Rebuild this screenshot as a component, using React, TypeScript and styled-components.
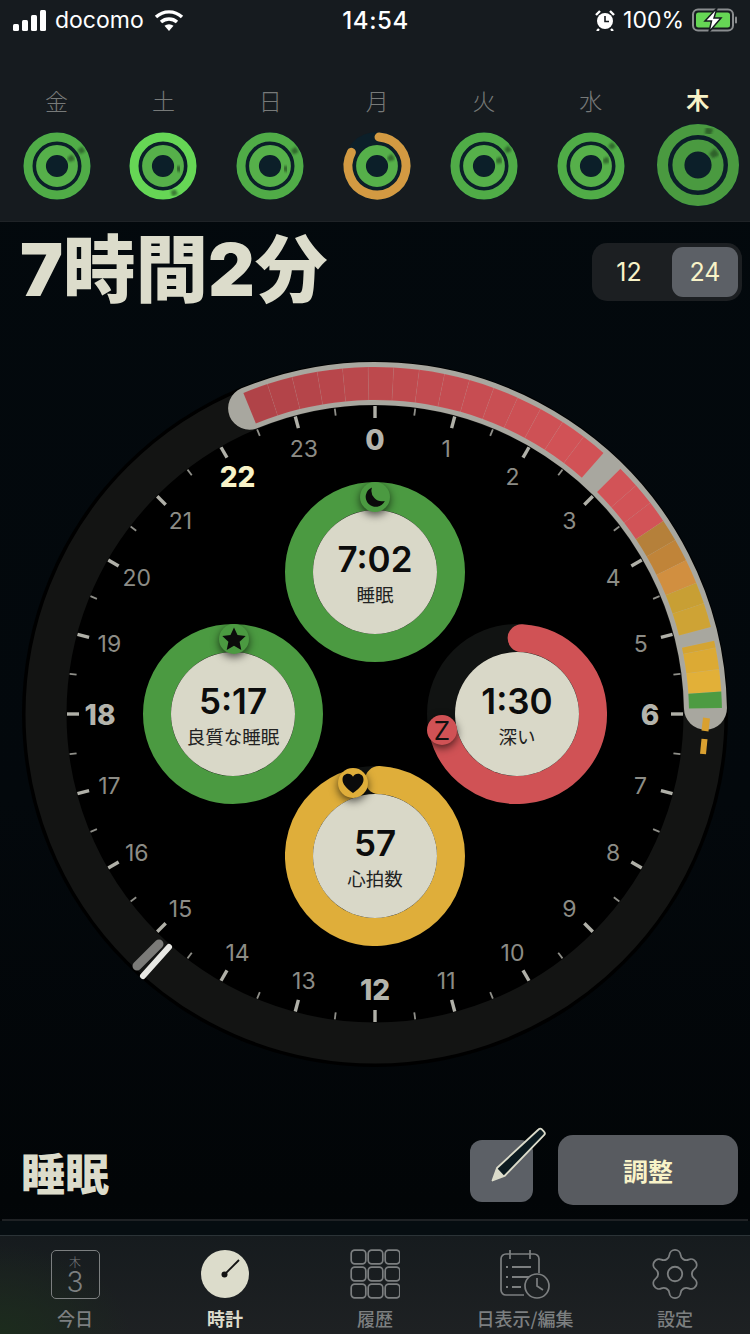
import React from "react";
import styled, { createGlobalStyle } from "styled-components";
import { Settings } from "lucide-react";

const FONT = `Inter, "Noto Sans CJK JP", "Noto Sans", sans-serif`;
const CJK = `"Noto Sans CJK JP", Inter, sans-serif`;
const CREAM = "#dcdccb";
const PALE = "#f8f3c8";
const GREY = "#7c7f80";

const Global = createGlobalStyle`
  html, body { margin: 0; padding: 0; background: #03080c; }
  #root { width: 750px; height: 1334px; overflow: hidden; }
  * { box-sizing: border-box; }
`;

const Page = styled.div`
  width: 750px;
  height: 1334px;
  display: flex;
  flex-direction: column;
  font-family: ${FONT};
  background: linear-gradient(180deg, #03090d 0%, #03080c 60%, #020507 90%, #03090c 100%);
  color: ${CREAM};
`;

const Head = styled.header`
  height: 222px;
  flex: none;
  background: #161b1f;
  border-bottom: 1px solid #1f2327;
  display: flex;
  flex-direction: column;
`;

const StatusBar = styled.div`
  height: 40px;
  padding: 0 12px 0 13px;
  display: flex;
  align-items: center;
  color: #fff;
  font-size: 23px;
`;
const StatusLeft = styled.div`
  flex: 1;
  display: flex;
  align-items: center;
  gap: 9px;
`;
const StatusRight = styled.div`
  flex: 1;
  display: flex;
  align-items: center;
  justify-content: flex-end;
  gap: 8px;
`;
const Clock = styled.div`
  font-weight: 500;
  font-size: 24px;
  letter-spacing: 0.6px;
`;
const StatusText = styled.span`
  letter-spacing: 0;
`;

const Week = styled.div`
  padding: 42px 3px 0 3.2px;
  display: flex;
`;
const Day = styled.div`
  width: 106.85px;
  flex: none;
  height: 127px;
  display: flex;
  flex-direction: column;
  align-items: center;
`;
const DayName = styled.div<{ $now?: boolean }>`
  height: 39px;
  font-family: ${CJK};
  font-size: 23px;
  line-height: 36px;
  font-weight: ${(p) => (p.$now ? 700 : 300)};
  color: ${(p) => (p.$now ? PALE : "#777a79")};
  margin-top: ${(p) => (p.$now ? "-1px" : "0")};
  padding-bottom: ${(p) => (p.$now ? "0" : "3px")};
`;
const RingBox = styled.svg<{ $now?: boolean }>`
  width: 90px;
  height: 90px;
  flex: none;
  margin-top: ${(p) => (p.$now ? "3px" : "0")};
`;

const TitleRow = styled.div`
  height: 132px;
  flex: none;
  padding: 21px 8px 0 20px;
  display: flex;
  justify-content: space-between;
  align-items: flex-start;
`;
const BigTitle = styled.h1`
  margin: 0;
  font-family: ${FONT};
  font-size: 72.5px;
  line-height: 54px;
  height: 54px;
  font-weight: 900;
  letter-spacing: 0;
  color: ${CREAM};
  display: flex;
  align-items: center;
`;
const Toggle = styled.div`
  width: 150px;
  height: 58px;
  border-radius: 15px;
  background: #1c1f22;
  padding: 4px;
  display: flex;
  justify-content: space-between;
`;
const ToggleItem = styled.div<{ $on?: boolean }>`
  width: 66px;
  height: 50px;
  border-radius: 11px;
  background: ${(p) => (p.$on ? "#5c6066" : "transparent")};
  color: ${PALE};
  font-size: 25px;
  display: flex;
  align-items: center;
  justify-content: center;
`;

const Dial = styled.div`
  position: relative;
  height: 720px;
  flex: none;
`;
const DialArt = styled.svg`
  display: block;
  width: 750px;
  height: 720px;
`;
const HourText = styled.text<{ $kind: "minor" | "major" | "now" }>`
  font-family: ${FONT};
  text-anchor: middle;
  dominant-baseline: central;
  font-size: ${(p) => (p.$kind === "minor" ? 23 : 28)}px;
  font-weight: ${(p) => (p.$kind === "minor" ? 400 : 800)};
  fill: ${(p) => (p.$kind === "minor" ? "#8c8c86" : p.$kind === "now" ? PALE : "#b4b4ac")};
`;

const Gauge = styled.div<{ $x: number; $y: number }>`
  position: absolute;
  left: ${(p) => p.$x - 90}px;
  top: ${(p) => p.$y - 354 - 90}px;
  width: 180px;
  height: 180px;
`;
const GaugeArt = styled.svg`
  position: absolute;
  inset: 0;
  width: 180px;
  height: 180px;
`;
const GaugeFace = styled.div`
  position: absolute;
  left: 28px;
  top: 28px;
  width: 124px;
  height: 124px;
  border-radius: 50%;
  padding-top: 3px;
  background: #d9d8c8;
  color: #0c0c0c;
  display: flex;
  flex-direction: column;
  align-items: center;
  justify-content: center;
`;
const GaugeValue = styled.div`
  font-size: 35px;
  line-height: 38px;
  font-weight: 600;
`;
const GaugeLabel = styled.div`
  font-family: ${CJK};
  font-size: 18.5px;
  line-height: 26px;
  margin-top: 3px;
  font-weight: 400;
  color: #222;
  white-space: nowrap;
`;
const Badge = styled.div<{ $dx: number; $dy: number; $color: string }>`
  position: absolute;
  left: ${(p) => p.$dx + 90 - 15}px;
  top: ${(p) => p.$dy + 90 - 15}px;
  width: 30px;
  height: 30px;
  border-radius: 50%;
  background: ${(p) => p.$color};
  box-shadow: 0 3px 8px rgba(0, 0, 0, 0.65);
  display: flex;
  align-items: center;
  justify-content: center;
  color: #111;
  font-size: 26px;
  font-weight: 400;
`;
const BadgeIcon = styled.svg`
  width: 26px;
  height: 26px;
`;

const Actions = styled.div`
  height: 145px;
  flex: none;
  padding: 61px 12px 0 21px;
  display: flex;
  align-items: flex-start;
`;
const Subject = styled.div`
  flex: 1;
  font-family: ${CJK};
  font-size: 44px;
  font-weight: 900;
  line-height: 64px;
  margin-top: 5px;
  color: ${CREAM};
`;
const PenButton = styled.div`
  position: relative;
  width: 63px;
  height: 62px;
  margin-top: 5px;
  margin-right: 25px;
  border-radius: 12px;
  background: #5c6066;
`;
const PenArt = styled.svg`
  position: absolute;
  left: 19px;
  top: -14px;
  width: 60px;
  height: 60px;
`;
const AdjustButton = styled.div`
  width: 180px;
  height: 70px;
  border-radius: 15px;
  background: #585b60;
  color: ${PALE};
  font-family: ${CJK};
  font-size: 25px;
  font-weight: 700;
  display: flex;
  align-items: center;
  justify-content: center;
`;

const Divider = styled.div`
  height: 2px;
  flex: none;
  margin: 0 2px;
  background: #1f2225;
`;
const Spacer = styled.div`
  height: 14px;
  flex: none;
  background: #060d11;
`;
const TabBar = styled.nav`
  flex: 1;
  border-top: 1px solid #2b3337;
  display: flex;
  background: radial-gradient(ellipse 130px 90px at 0 100%, #1c2c1d 0%, transparent 100%),
    linear-gradient(180deg, #161b1e 0%, #1e2123 100%);
`;
const Tab = styled.div<{ $on?: boolean }>`
  width: 150px;
  padding-top: 13px;
  display: flex;
  flex-direction: column;
  align-items: center;
  color: ${(p) => (p.$on ? CREAM : GREY)};
`;
const TabIconBox = styled.div`
  width: 50px;
  height: 50px;
  display: flex;
  align-items: center;
  justify-content: center;
`;
const TabLabel = styled.div<{ $on?: boolean }>`
  margin-top: 6px;
  font-family: ${CJK};
  font-size: 18px;
  line-height: 26px;
  font-weight: ${(p) => (p.$on ? 700 : 500)};
  white-space: nowrap;
`;
const TodayIcon = styled.div`
  width: 49px;
  height: 49px;
  border: 1.5px solid ${GREY};
  border-radius: 5px;
  display: flex;
  flex-direction: column;
  align-items: center;
  font-weight: 300;
`;
const TodayDow = styled.div`
  font-family: ${CJK};
  font-size: 12px;
  line-height: 13px;
  margin-top: 4px;
  font-weight: 300;
`;
const TodayNum = styled.div`
  font-size: 28px;
  line-height: 28px;
  font-weight: 300;
`;
const TabSvg = styled.svg`
  width: 50px;
  height: 50px;
`;
const Gear = styled(Settings)`
  width: 58px;
  height: 58px;
  flex: none;
`;

/* ---------- geometry helpers ---------- */
const CX = 375;
const CY = 714;
const pol = (a: number, r: number, cx = CX, cy = CY): [number, number] => {
  const t = (a * Math.PI) / 180;
  return [cx + r * Math.sin(t), cy - r * Math.cos(t)];
};
const arc = (a0: number, a1: number, r: number, cx = CX, cy = CY) => {
  const [x0, y0] = pol(a0, r, cx, cy);
  const [x1, y1] = pol(a1, r, cx, cy);
  return `M${x0} ${y0}A${r} ${r} 0 ${a1 - a0 > 180 ? 1 : 0} 1 ${x1} ${y1}`;
};
const band = (a0: number, a1: number, r0: number, r1: number) => {
  const [a, b] = pol(a0, r1);
  const [c, d] = pol(a1, r1);
  const [e, f] = pol(a1, r0);
  const [g, h] = pol(a0, r0);
  return `M${a} ${b}A${r1} ${r1} 0 0 1 ${c} ${d}L${e} ${f}A${r0} ${r0} 0 0 0 ${g} ${h}Z`;
};
const mix = (t: number) => {
  const A = [176, 67, 72];
  const B = [209, 82, 86];
  const k = Math.min(1, Math.max(0, t));
  return `rgb(${A.map((v, i) => Math.round(v + (B[i] - v) * k)).join(",")})`;
};

const redSegs = Array.from({ length: 15 }, (_, i) => {
  const s = (41.2 + 22.3) / 15;
  return { a0: -22.3 + i * s, a1: -22.3 + (i + 1) * s, c: mix(i / 13) };
});
const sleepSegs = [
  { a0: 45, a1: 48.8, c: "#d25357" },
  { a0: 48.8, a1: 52.5, c: "#d25357" },
  { a0: 52.5, a1: 56.2, c: "#d25357" },
  { a0: 56.2, a1: 59.9, c: "#b5803a" },
  { a0: 59.9, a1: 63.7, c: "#c08439" },
  { a0: 63.7, a1: 67.8, c: "#d18f40" },
  { a0: 67.8, a1: 71.4, c: "#c89f34" },
  { a0: 71.4, a1: 75.5, c: "#cea335" },
  { a0: 77.8, a1: 79, c: "#d4a433" },
  { a0: 79, a1: 82.6, c: "#dcaa34" },
  { a0: 82.6, a1: 86.3, c: "#e2b038" },
  { a0: 86.3, a1: 89, c: "#4d9b42" },
];

const hours = Array.from({ length: 24 }, (_, h) => h);

function DialDrawing() {
  return (
    <DialArt viewBox="0 354 750 720">
      <circle cx={CX} cy={CY} r={353} fill="#000" />
      <circle cx={CX} cy={CY} r={329} fill="none" stroke="#131413" strokeWidth={41} />
      <path d={arc(-22.3, 89, 330.5)} fill="none" stroke="#a8a79f" strokeWidth={43} strokeLinecap="round" />
      {redSegs.map((s, i) => (
        <path key={i} d={band(s.a0, s.a1, 314, 347)} fill={s.c} stroke="rgba(255,255,255,.05)" strokeWidth={0.7} />
      ))}
      {sleepSegs.map((s, i) => (
        <path key={i} d={band(s.a0, s.a1, 314, 347)} fill={s.c} stroke="rgba(255,255,255,.04)" strokeWidth={0.7} />
      ))}
      <line x1={706.5} y1={718} x2={705} y2={731} stroke="#d9a030" strokeWidth={7} />
      <line x1={704.5} y1={739} x2={703} y2={754} stroke="#d9a030" strokeWidth={6} />
      {Array.from({ length: 48 }, (_, i) => {
        const a = i * 7.5;
        const major = i % 2 === 0;
        const [x0, y0] = pol(a, major ? 296 : 301);
        const [x1, y1] = pol(a, 308);
        return (
          <line
            key={i}
            x1={x0}
            y1={y0}
            x2={x1}
            y2={y1}
            stroke={major ? "#b0b0a8" : "#8f8f89"}
            strokeWidth={major ? 3.4 : 1.8}
          />
        );
      })}
      {hours.map((h) => {
        const [x, y] = pol(h * 15, 275);
        const kind = h === 22 ? "now" : h % 6 === 0 ? "major" : "minor";
        return (
          <HourText key={h} x={x} y={y + 1} $kind={kind}>
            {h}
          </HourText>
        );
      })}
      <line x1={137} y1={966} x2={159} y2={944} stroke="#7b7b78" strokeWidth={9} strokeLinecap="round" />
      <line x1={143} y1={976} x2={169} y2={947} stroke="#e8e8e4" strokeWidth={6} strokeLinecap="round" />
    </DialArt>
  );
}

const MoonGlyph = () => (
  <BadgeIcon viewBox="0 0 26 26">
    <path d="M10 3.500a10 10 0 1 0 12.800 13.400A10.500 10.500 0 0 1 10 3.500Z" fill="#0b0b0b" />
  </BadgeIcon>
);
const StarGlyph = () => (
  <BadgeIcon viewBox="0 0 26 26">
    <path d="M13 1.500l3.500 7.600 8.200 1-6.100 5.600 1.700 8.200L13 19.800l-7.300 4.100 1.700-8.200-6.100-5.600 8.200-1z" fill="#0b0b0b" />
  </BadgeIcon>
);
const HeartGlyph = () => (
  <BadgeIcon viewBox="0 0 26 26">
    <path d="M13 23C6 18 2.500 14 2.500 9.500 2.500 6 5 3.800 8 3.800c2.200 0 4 1.100 5 3 1-1.900 2.800-3 5-3 3 0 5.500 2.200 5.500 5.700C23.500 14 20 18 13 23Z" fill="#0b0b0b" />
  </BadgeIcon>
);

type GaugeProps = {
  x: number;
  y: number;
  color: string;
  from: number;
  to: number;
  full?: boolean;
  value: string;
  label: string;
  bx: number;
  by: number;
  glyph: React.ReactNode;
};
function Meter({ x, y, color, from, to, full, value, label, bx, by, glyph }: GaugeProps) {
  return (
    <Gauge $x={x} $y={y}>
      <GaugeArt viewBox="0 0 180 180">
        <circle cx={90} cy={90} r={76} fill="none" stroke={full ? color : "#111312"} strokeWidth={28} />
        {!full && (
          <path d={arc(from, to, 76, 90, 90)} fill="none" stroke={color} strokeWidth={28} strokeLinecap="round" />
        )}
      </GaugeArt>
      <GaugeFace>
        <GaugeValue>{value}</GaugeValue>
        <GaugeLabel>{label}</GaugeLabel>
      </GaugeFace>
      <Badge $dx={bx} $dy={by} $color={color}>
        {glyph}
      </Badge>
    </Gauge>
  );
}

type Mini = {
  name: string;
  now?: boolean;
  outer: string;
  inner: string;
  oa: number;
  ia: number;
  arcFrom?: number;
  arcTo?: number;
};
const days: Mini[] = [
  { name: "金", outer: "#50ac47", inner: "#56b04a", oa: 52, ia: 52 },
  { name: "土", outer: "#66d655", inner: "#56b04a", oa: 152, ia: 90 },
  { name: "日", outer: "#50ac47", inner: "#56b04a", oa: 53, ia: 90 },
  { name: "月", outer: "#d39a42", inner: "#56b04a", oa: 4, ia: 50, arcFrom: 4, arcTo: 298 },
  { name: "火", outer: "#50ac47", inner: "#56b04a", oa: 50, ia: 60 },
  { name: "水", outer: "#50ac47", inner: "#56b04a", oa: 41, ia: 60 },
  { name: "木", now: true, outer: "#4a9a40", inner: "#4a9a40", oa: 12, ia: 45 },
];

function MiniRing({ d }: { d: Mini }) {
  const s = d.now ? 41 / 33.5 : 1;
  const ro = 29 * s;
  const so = 9 * s;
  const ri = 16 * s;
  const si = 9.8 * s;
  return (
    <RingBox viewBox="0 0 90 90" $now={d.now}>
      <defs>
        <filter id="ringsoft" x="-80%" y="-80%" width="260%" height="260%">
          <feGaussianBlur stdDeviation="0.9" />
        </filter>
      </defs>
      <circle cx={45} cy={45} r={34 * s} fill="#0c1f29" />
      {d.arcFrom !== undefined ? (
        <path d={arc(d.arcFrom, d.arcTo!, ro, 45, 45)} fill="none" stroke={d.outer} strokeWidth={so} strokeLinecap="round" />
      ) : (
        <circle cx={45} cy={45} r={ro} fill="none" stroke={d.outer} strokeWidth={so} />
      )}
      <circle cx={45} cy={45} r={ri} fill="none" stroke={d.inner} strokeWidth={si} />
      {d.arcFrom === undefined && (
        <path d={arc(d.oa, d.oa + 11, ro, 45, 45)} fill="none" stroke="#1d3d1f" strokeWidth={so * 0.62} opacity={0.6} filter="url(#ringsoft)" />
      )}
      <path d={arc(d.ia, d.ia + 20, ri, 45, 45)} fill="none" stroke="#1d3d1f" strokeWidth={si * 0.62} opacity={0.6} filter="url(#ringsoft)" />
    </RingBox>
  );
}

export default function App() {
  return (
    <Page>
      <Global />
      <Head>
        <StatusBar>
          <StatusLeft>
            <svg width="33" height="21" viewBox="0 0 33 21">
              <g fill="#fff">
                <rect x="0" y="14" width="6" height="7" rx="1.500" />
                <rect x="9" y="10" width="6" height="11" rx="1.500" />
                <rect x="18" y="5" width="6" height="16" rx="1.500" />
                <rect x="27" y="0" width="6" height="21" rx="1.500" />
              </g>
            </svg>
            <StatusText>docomo</StatusText>
            <svg width="30" height="22" viewBox="0 0 30 22" style={{ marginLeft: 1 }}>
              <g fill="none" stroke="#fff" strokeWidth="3.400">
                <path d="M2 8a19 19 0 0 1 26 0" />
                <path d="M7 13a12 12 0 0 1 16 0" />
              </g>
              <path d="M10.500 16.800a7 7 0 0 1 9 0L15 22Z" fill="#fff" />
            </svg>
          </StatusLeft>
          <Clock>14:54</Clock>
          <StatusRight>
            <svg width="20" height="22" viewBox="0 0 20 22">
              <circle cx="10" cy="12" r="8" fill="#fff" />
              <path d="M10 7v5.500h4" stroke="#161b1f" strokeWidth="1.600" fill="none" />
              <path d="M1 6l4-4M19 6l-4-4M4 20l-2 2M16 20l2 2" stroke="#fff" strokeWidth="2.400" />
            </svg>
            <StatusText>100%</StatusText>
            <svg width="46" height="24" viewBox="0 0 46 24">
              <rect x="1" y="1.500" width="40" height="21" rx="5" fill="none" stroke="#8a8d8f" strokeWidth="2" />
              <rect x="4" y="4.500" width="34" height="15" rx="2.500" fill="#66d655" />
              <rect x="43" y="8.500" width="2" height="7" rx="1" fill="#8a8d8f" />
              <path d="M25 0L13 13h6.500L17 24l12-14h-7Z" fill="#fff" stroke="#161b1f" strokeWidth="1.500" />
            </svg>
          </StatusRight>
        </StatusBar>
        <Week>
          {days.map((d) => (
            <Day key={d.name}>
              <DayName $now={d.now}>{d.name}</DayName>
              <MiniRing d={d} />
            </Day>
          ))}
        </Week>
      </Head>

      <TitleRow>
        <BigTitle>7時間2分</BigTitle>
        <Toggle>
          <ToggleItem>12</ToggleItem>
          <ToggleItem $on>24</ToggleItem>
        </Toggle>
      </TitleRow>

      <Dial>
        <DialDrawing />
        <Meter x={375} y={572} color="#4b9a41" from={0} to={360} full value="7:02" label="睡眠" bx={0} by={-75} glyph={<MoonGlyph />} />
        <Meter x={233} y={714} color="#4b9a41" from={0} to={360} full value="5:17" label="良質な睡眠" bx={1} by={-75} glyph={<StarGlyph />} />
        <Meter x={517} y={714} color="#d05255" from={3.5} to={258} value="1:30" label="深い" bx={-75} by={16} glyph="Z" />
        <Meter x={375} y={856} color="#dfae3a" from={3} to={343} value="57" label="心拍数" bx={-22} by={-73} glyph={<HeartGlyph />} />
      </Dial>

      <Actions>
        <Subject>睡眠</Subject>
        <PenButton>
          <PenArt viewBox="0 0 60 60">
            <path d="M3.500 54.500 8 42 49.500 3.500c1-1 2.500-1 3.500 0l2 2.200c1 1 1 2.500 0 3.500L15.500 50Z" fill="#0b1a20" stroke={CREAM} strokeWidth="1.800" strokeLinejoin="round" />
            <path d="M3.500 54.500 8 42l7.500 8Z" fill={CREAM} />
          </PenArt>
        </PenButton>
        <AdjustButton>調整</AdjustButton>
      </Actions>
      <Divider />
      <Spacer />

      <TabBar>
        <Tab>
          <TabIconBox>
            <TodayIcon>
              <TodayDow>木</TodayDow>
              <TodayNum>3</TodayNum>
            </TodayIcon>
          </TabIconBox>
          <TabLabel>今日</TabLabel>
        </Tab>
        <Tab $on>
          <TabIconBox>
            <TabSvg viewBox="0 0 50 50">
              <circle cx="25" cy="25" r="24" fill={CREAM} />
              <path d="M25 25 39 11" stroke="#111" strokeWidth="1.800" />
              <circle cx="24.500" cy="25.500" r="3" fill="#111" />
            </TabSvg>
          </TabIconBox>
          <TabLabel $on>時計</TabLabel>
        </Tab>
        <Tab>
          <TabIconBox>
            <TabSvg viewBox="0 0 50 50">
              {[0, 17, 34].map((y) =>
                [0, 17, 34].map((x) => (
                  <rect key={`${x}-${y}`} x={x + 1.2} y={y + 1.2} width="14.600" height="13.600" rx="3.500" fill="none" stroke={GREY} strokeWidth="1.700" />
                ))
              )}
            </TabSvg>
          </TabIconBox>
          <TabLabel>履歴</TabLabel>
        </Tab>
        <Tab>
          <TabIconBox>
            <TabSvg viewBox="0 0 50 50">
              <g fill="none" stroke={GREY} strokeWidth="1.700">
                <path d="M24 46H6a5 5 0 0 1-5-5V10a5 5 0 0 1 5-5h28a5 5 0 0 1 5 5v14" />
                <path d="M10 1v9M30 1v9" />
                <path d="M12 18h19M12 28h19M12 38h9" strokeWidth="2.200" />
                <path d="M6 18h2M6 28h2M6 38h2" strokeWidth="2.200" />
                <circle cx="37" cy="37" r="12" fill="#1c2022" />
                <path d="M37 29v8l6 4" />
              </g>
            </TabSvg>
          </TabIconBox>
          <TabLabel>日表示/編集</TabLabel>
        </Tab>
        <Tab>
          <TabIconBox>
            <Gear strokeWidth={0.75} />
          </TabIconBox>
          <TabLabel>設定</TabLabel>
        </Tab>
      </TabBar>
    </Page>
  );
}
